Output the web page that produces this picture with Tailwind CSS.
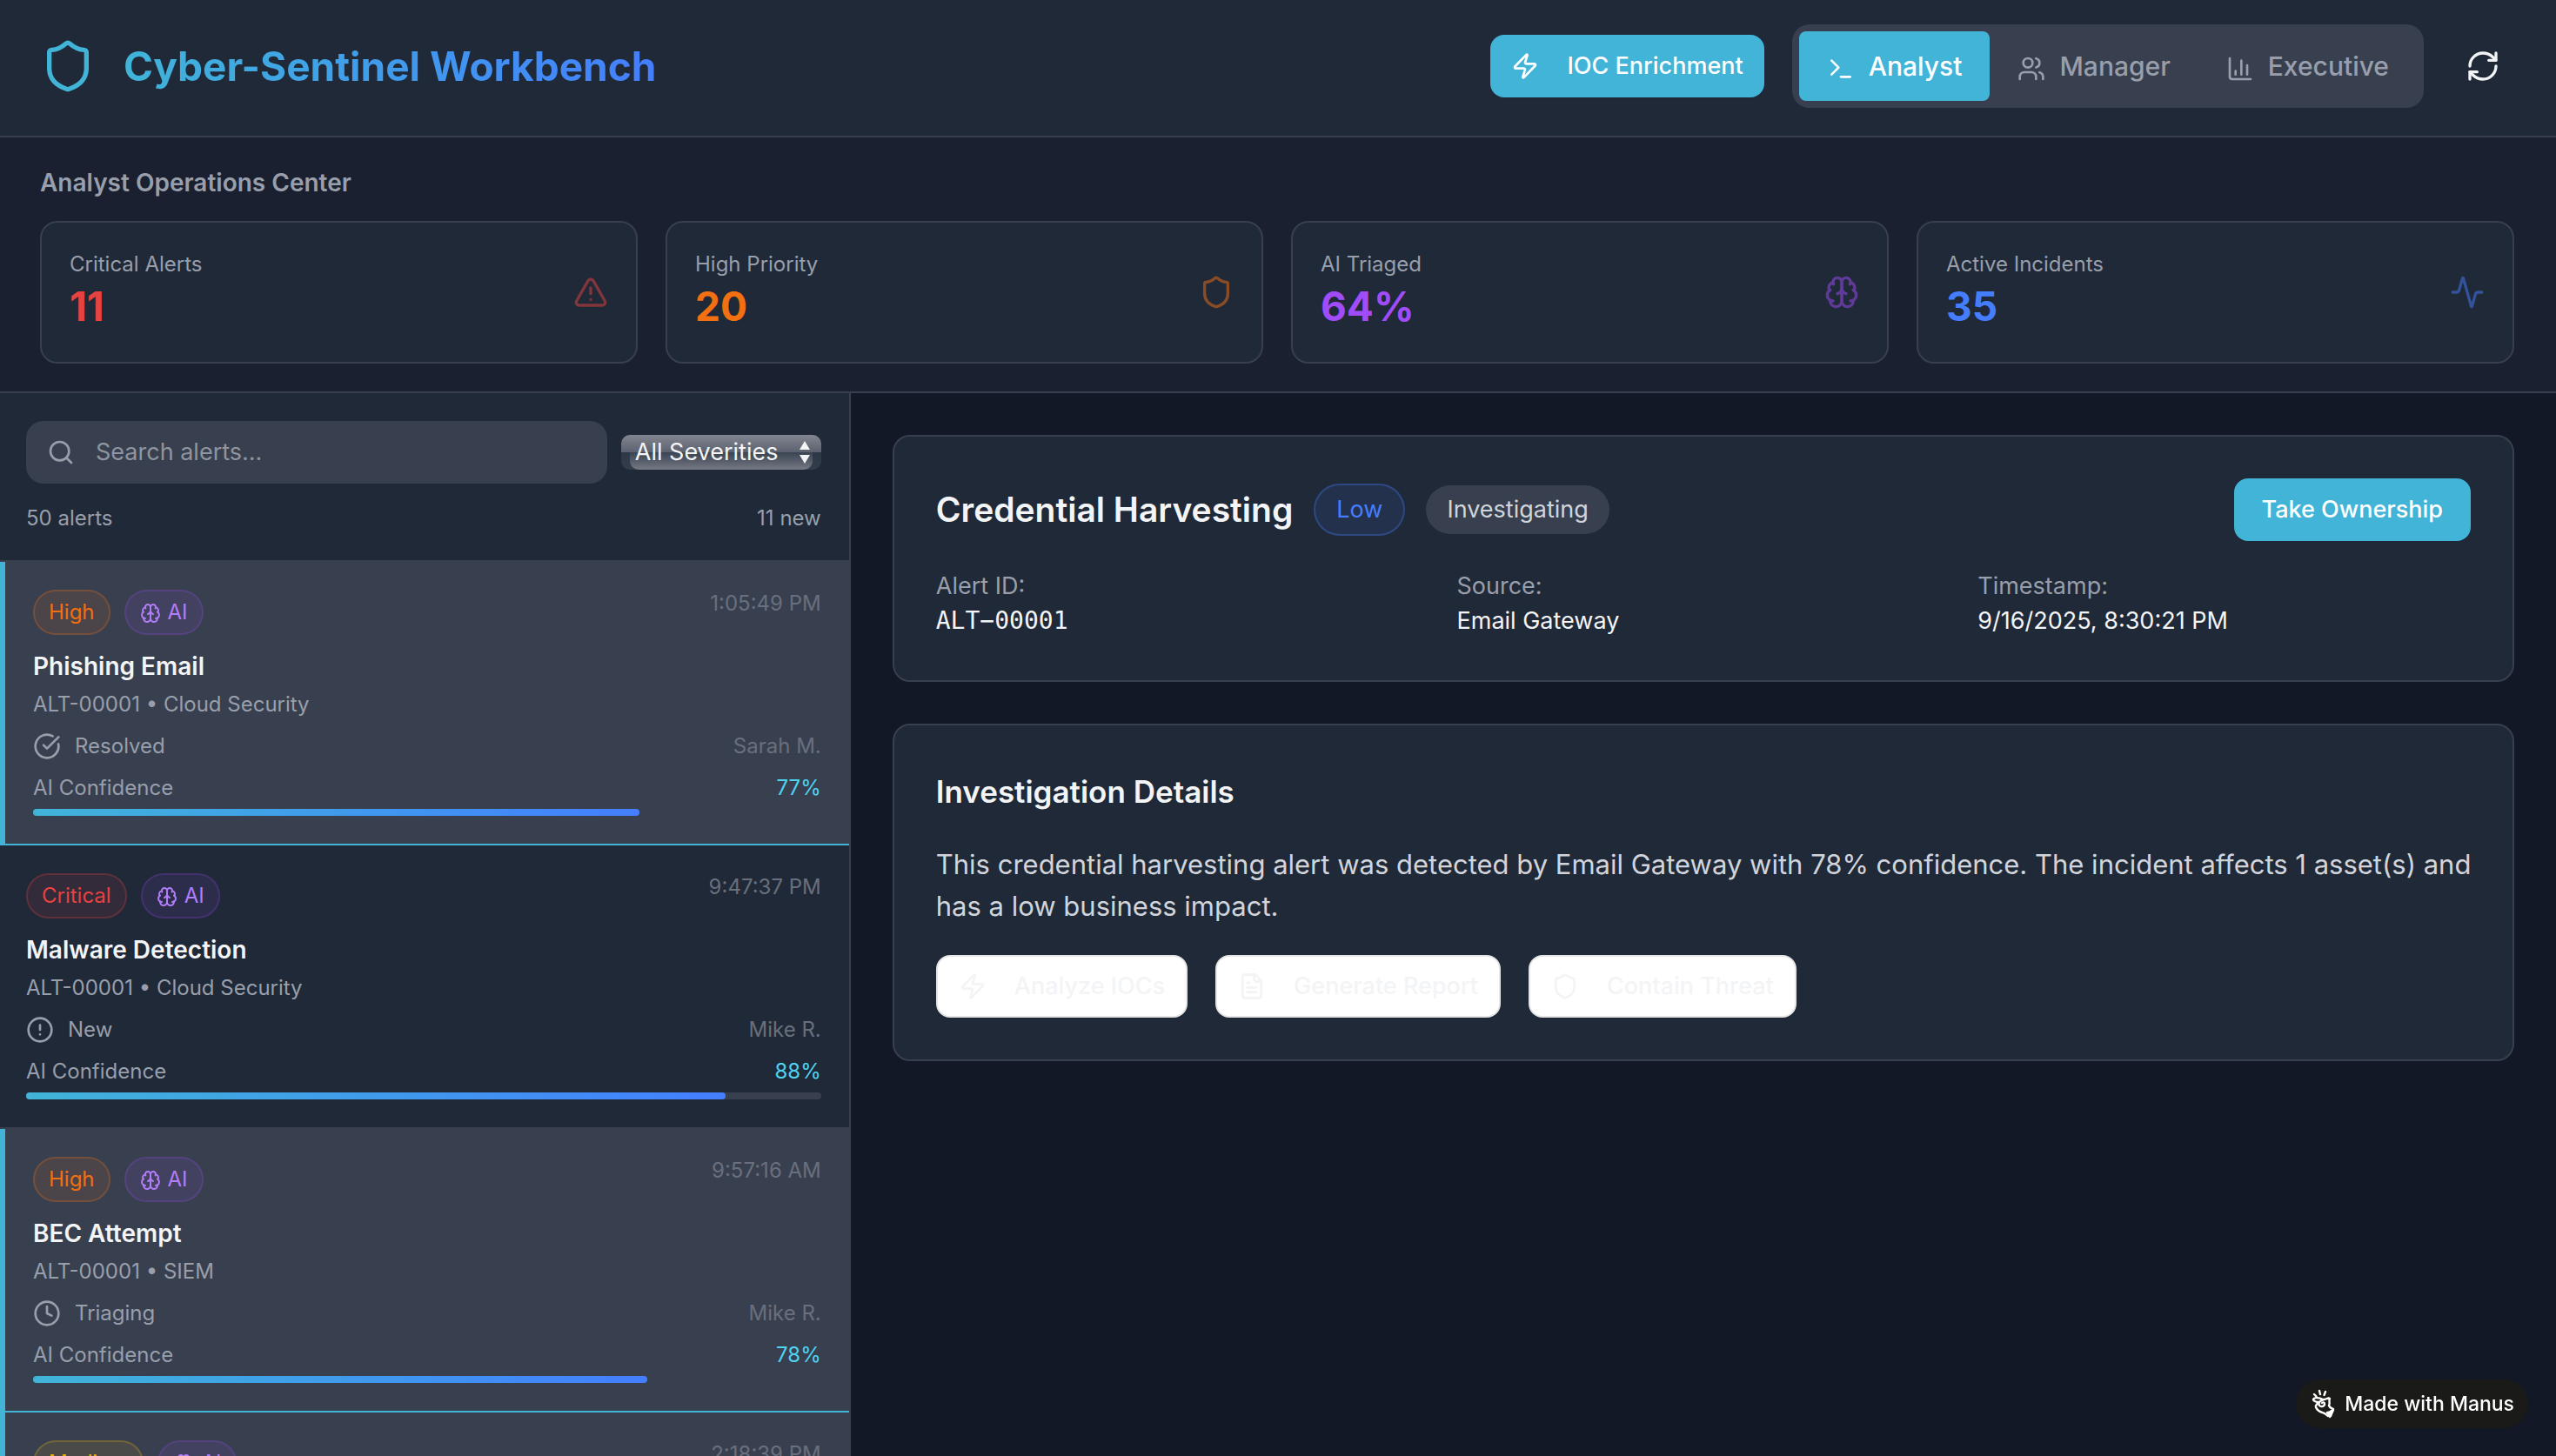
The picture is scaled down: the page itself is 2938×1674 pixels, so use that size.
<!DOCTYPE html>
<html lang="en">
<head>
<meta charset="utf-8">
<meta name="viewport" content="width=device-width, initial-scale=1">
<title>Cyber-Sentinel Workbench</title>
<script src="https://cdn.jsdelivr.net/npm/@tailwindcss/browser@4"></script>
</head>
<body class="flex h-screen flex-col overflow-hidden bg-[#121826] font-['Inter',sans-serif] text-[28px] leading-10 text-[#f3f4f6]">

<!-- Icon set -->
<svg class="hidden" aria-hidden="true">
  <symbol id="shield" viewBox="0 0 24 24"><path d="M20 13c0 5-3.5 7.5-7.66 8.95a1 1 0 0 1-.67-.01C7.5 20.5 4 18 4 13V6a1 1 0 0 1 1-1c2 0 4.5-1.2 6.24-2.72a1.17 1.17 0 0 1 1.52 0C14.51 3.81 17 5 19 5a1 1 0 0 1 1 1z"/></symbol>
  <symbol id="zap" viewBox="0 0 24 24"><path d="M4 14a1 1 0 0 1-.78-1.63l9.9-10.2a.5.5 0 0 1 .86.46l-1.92 6.02A1 1 0 0 0 13 10h7a1 1 0 0 1 .78 1.63l-9.9 10.2a.5.5 0 0 1-.86-.46l1.92-6.02A1 1 0 0 0 11 14z"/></symbol>
  <symbol id="terminal" viewBox="0 0 24 24"><path d="m4 17 6-6-6-6M12 19h8"/></symbol>
  <symbol id="users" viewBox="0 0 24 24"><path d="M16 21v-2a4 4 0 0 0-4-4H6a4 4 0 0 0-4 4v2"/><circle cx="9" cy="7" r="4"/><path d="M22 21v-2a4 4 0 0 0-3-3.87M16 3.13a4 4 0 0 1 0 7.75"/></symbol>
  <symbol id="chart" viewBox="0 0 24 24"><path d="M3 3v16a2 2 0 0 0 2 2h16M18 17V9M13 17V5M8 17v-3"/></symbol>
  <symbol id="refresh" viewBox="0 0 24 24"><path d="M3 12a9 9 0 0 1 9-9 9.75 9.75 0 0 1 6.74 2.74L21 8"/><path d="M21 3v5h-5M21 12a9 9 0 0 1-9 9 9.75 9.75 0 0 1-6.74-2.74L3 16"/><path d="M8 16H3v5"/></symbol>
  <symbol id="triangle" viewBox="0 0 24 24"><path d="m21.73 18-8-14a2 2 0 0 0-3.48 0l-8 14A2 2 0 0 0 4 21h16a2 2 0 0 0 1.73-3M12 9v4M12 17h.01"/></symbol>
  <symbol id="brain" viewBox="0 0 24 24"><path d="M12 5a3 3 0 1 0-5.997.125 4 4 0 0 0-2.526 5.77 4 4 0 0 0 .556 6.588A4 4 0 1 0 12 18Z"/><path d="M12 5a3 3 0 1 1 5.997.125 4 4 0 0 1 2.526 5.77 4 4 0 0 1-.556 6.588A4 4 0 1 1 12 18Z"/><path d="M15 13a4.5 4.5 0 0 1-3-4 4.5 4.5 0 0 1-3 4M17.599 6.5a3 3 0 0 0 .399-1.375M6.003 5.125A3 3 0 0 0 6.401 6.5M3.477 10.896a4 4 0 0 1 .585-.396M19.938 10.5a4 4 0 0 1 .585.396M6 18a4 4 0 0 1-1.967-.516M19.967 17.484A4 4 0 0 1 18 18"/></symbol>
  <symbol id="activity" viewBox="0 0 24 24"><path d="M22 12h-2.48a2 2 0 0 0-1.93 1.46l-2.35 8.36a.25.25 0 0 1-.48 0L9.24 2.18a.25.25 0 0 0-.48 0l-2.35 8.36A2 2 0 0 1 4.49 12H2"/></symbol>
  <symbol id="search" viewBox="0 0 24 24"><circle cx="11" cy="11" r="8"/><path d="m21 21-4.34-4.34"/></symbol>
  <symbol id="resolved" viewBox="0 0 24 24"><path d="M21.801 10A10 10 0 1 1 17 3.335"/><path d="m9 11 3 3L22 4"/></symbol>
  <symbol id="new" viewBox="0 0 24 24"><circle cx="12" cy="12" r="10"/><path d="M12 8v4M12 16h.01"/></symbol>
  <symbol id="clock" viewBox="0 0 24 24"><circle cx="12" cy="12" r="10"/><path d="M12 6v6l4 2"/></symbol>
  <symbol id="file" viewBox="0 0 24 24"><path d="M15 2H6a2 2 0 0 0-2 2v16a2 2 0 0 0 2 2h12a2 2 0 0 0 2-2V7Z"/><path d="M14 2v4a2 2 0 0 0 2 2h4M10 9H8M16 13H8M16 17H8"/></symbol>
</svg>

<header class="flex shrink-0 items-center justify-between border-b-2 border-[#384050] bg-[#202938] pt-7 pr-12 pb-8 pl-[46px]">
  <div class="flex items-center gap-8">
    <svg class="size-16 fill-none stroke-[#41b4d8] stroke-2 [stroke-linecap:round] [stroke-linejoin:round]"><use href="#shield"/></svg>
    <h1 class="bg-linear-to-r from-[#41b4d8] to-[#447efe] bg-clip-text text-[46px] leading-16 font-bold text-transparent">Cyber-Sentinel Workbench</h1>
  </div>
  <div class="flex items-center gap-8">
    <button type="button" class="flex h-18 items-center gap-8 rounded-2xl bg-[#41b4d8] px-6 text-[27px] font-medium text-white shadow-xs">
      <svg class="size-8 fill-none stroke-current stroke-2 [stroke-linecap:round] [stroke-linejoin:round]"><use href="#zap"/></svg>IOC Enrichment
    </button>
    <nav class="flex rounded-[20px] bg-[#384050] p-2 text-[30px] leading-12 font-medium text-[#989fab]">
      <button type="button" class="rounded-lg bg-[#41b4d8] px-8 py-4 text-white"><svg class="mr-4 inline size-8 fill-none stroke-current stroke-2 [stroke-linecap:round] [stroke-linejoin:round]"><use href="#terminal"/></svg>Analyst</button>
      <button type="button" class="rounded-lg px-8 py-4"><svg class="mr-4 inline size-8 fill-none stroke-current stroke-2 [stroke-linecap:round] [stroke-linejoin:round]"><use href="#users"/></svg>Manager</button>
      <button type="button" class="rounded-lg px-8 py-4"><svg class="mr-4 inline size-8 fill-none stroke-current stroke-2 [stroke-linecap:round] [stroke-linejoin:round]"><use href="#chart"/></svg>Executive</button>
    </nav>
    <button type="button" aria-label="Refresh" class="p-4"><svg class="size-10 fill-none stroke-current stroke-2 [stroke-linecap:round] [stroke-linejoin:round]"><use href="#refresh"/></svg></button>
  </div>
</header>

<section class="shrink-0 border-b-2 border-[#384050] bg-[#1a202f] pt-8 pr-12 pb-8 pl-[46px]">
  <h2 class="mb-6 font-semibold text-[#989fab]">Analyst Operations Center</h2>
  <div class="grid grid-cols-4 gap-8">
    <div class="flex items-center justify-between rounded-[20px] border-2 border-[#384050] bg-[#202938] p-8">
      <div><p class="text-2xl text-[#989fab]">Critical Alerts</p><p class="text-[46px] leading-16 font-bold text-[#e64240]">11</p></div>
      <svg class="size-10 fill-none stroke-[#e64240] stroke-2 opacity-50 [stroke-linecap:round] [stroke-linejoin:round]"><use href="#triangle"/></svg>
    </div>
    <div class="flex items-center justify-between rounded-[20px] border-2 border-[#384050] bg-[#202938] p-8">
      <div><p class="text-2xl text-[#989fab]">High Priority</p><p class="text-[46px] leading-16 font-bold text-[#f27011]">20</p></div>
      <svg class="size-10 fill-none stroke-[#f27011] stroke-2 opacity-50 [stroke-linecap:round] [stroke-linejoin:round]"><use href="#shield"/></svg>
    </div>
    <div class="flex items-center justify-between rounded-[20px] border-2 border-[#384050] bg-[#202938] p-8">
      <div><p class="text-2xl text-[#989fab]">AI Triaged</p><p class="text-[46px] leading-16 font-bold text-[#a04cf8]">64%</p></div>
      <svg class="size-10 fill-none stroke-[#a04cf8] stroke-2 opacity-50 [stroke-linecap:round] [stroke-linejoin:round]"><use href="#brain"/></svg>
    </div>
    <div class="flex items-center justify-between rounded-[20px] border-2 border-[#384050] bg-[#202938] p-8">
      <div><p class="text-2xl text-[#989fab]">Active Incidents</p><p class="text-[46px] leading-16 font-bold text-[#447efe]">35</p></div>
      <svg class="size-10 fill-none stroke-[#447efe] stroke-2 opacity-50 [stroke-linecap:round] [stroke-linejoin:round]"><use href="#activity"/></svg>
    </div>
  </div>
</section>

<div class="flex min-h-0 flex-1">
  <aside class="flex w-[33.28%] shrink-0 flex-col overflow-hidden border-r-2 border-[#384050] bg-[#202938] text-2xl text-[#989fab]">
    <div class="shrink-0 border-b-2 border-[#384050] py-8 pr-8 pl-[30px]">
      <div class="flex items-center gap-4">
        <label class="flex h-18 min-w-0 flex-1 items-center gap-6 rounded-[20px] bg-[#384050] px-6">
          <svg class="size-8 shrink-0 fill-none stroke-current stroke-2 [stroke-linecap:round] [stroke-linejoin:round]"><use href="#search"/></svg>
          <input type="text" aria-label="Search alerts" placeholder="Search alerts..." class="min-w-0 flex-1 bg-transparent text-[27px] outline-none placeholder:text-[#8f949e]">
        </label>
        <div class="relative h-10 w-[230px] overflow-hidden rounded-[10px] bg-[linear-gradient(to_bottom,#83868f,#5b6170_50%,#2e3746_50%,#343d4c)]">
          <div class="absolute inset-x-[10px] top-1/2 bottom-0 rounded-b-[10px] bg-linear-to-b from-[#3a4351] to-[#767a84]"></div>
          <select aria-label="Severity" class="relative h-10 w-full appearance-none bg-transparent pl-4 text-[27px] text-[#f3f4f6] outline-none">
            <option>All Severities</option><option>Critical</option><option>High</option><option>Medium</option><option>Low</option>
          </select>
          <svg viewBox="0 0 14 28" class="pointer-events-none absolute top-1.5 right-3 h-7 w-3.5 fill-[#f3f4f6]"><path d="M7 1l6 10H1zM7 27l6-10H1z"/></svg>
        </div>
      </div>
      <div class="mt-6 flex justify-between leading-8"><span>50 alerts</span><span>11 new</span></div>
    </div>

    <ul class="min-h-0 flex-1 overflow-hidden leading-8">
      <li class="border-b-2 border-l-6 border-[#41b4d8] bg-[#384050] p-8">
        <div class="flex items-start justify-between">
          <div class="flex gap-4">
            <span class="rounded-full border-2 border-[#f27011]/25 bg-[#f27011]/10 px-4 py-2 text-[#f27011]">High</span>
            <span class="rounded-full border-2 border-[#a04cf8]/20 bg-[#a04cf8]/10 px-4 py-2 text-[#b27df8]"><svg class="mr-2 inline size-6 fill-none stroke-current stroke-2 [stroke-linecap:round] [stroke-linejoin:round]"><use href="#brain"/></svg>AI</span>
          </div>
          <time class="text-[#696f7c]">1:05:49 PM</time>
        </div>
        <h3 class="mt-4 text-[28px] leading-10 font-semibold text-[#f3f4f6]">Phishing Email</h3>
        <p class="mt-2">ALT-00001 • Cloud Security</p>
        <div class="mt-4 flex items-center gap-4"><svg class="size-8 fill-none stroke-current stroke-2 [stroke-linecap:round] [stroke-linejoin:round]"><use href="#resolved"/></svg><span>Resolved</span><span class="ml-auto text-[#696f7c]">Sarah M.</span></div>
        <div class="mt-4 flex justify-between"><span>AI Confidence</span><span class="text-[#4fd3f0]">77%</span></div>
        <div class="mt-2 h-2 rounded-full bg-[#384050]"><div class="h-2 rounded-full bg-linear-to-r from-[#41b4d8] to-[#447efe]" style="width:77%"></div></div>
      </li>
      <li class="border-b-2 border-[#384050] py-8 pr-8 pl-[30px]">
        <div class="flex items-start justify-between">
          <div class="flex gap-4">
            <span class="rounded-full border-2 border-[#e64240]/25 bg-[#e64240]/10 px-4 py-2 text-[#e64240]">Critical</span>
            <span class="rounded-full border-2 border-[#a04cf8]/20 bg-[#a04cf8]/10 px-4 py-2 text-[#b27df8]"><svg class="mr-2 inline size-6 fill-none stroke-current stroke-2 [stroke-linecap:round] [stroke-linejoin:round]"><use href="#brain"/></svg>AI</span>
          </div>
          <time class="text-[#696f7c]">9:47:37 PM</time>
        </div>
        <h3 class="mt-4 text-[28px] leading-10 font-semibold text-[#f3f4f6]">Malware Detection</h3>
        <p class="mt-2">ALT-00001 • Cloud Security</p>
        <div class="mt-4 flex items-center gap-4"><svg class="size-8 fill-none stroke-current stroke-2 [stroke-linecap:round] [stroke-linejoin:round]"><use href="#new"/></svg><span>New</span><span class="ml-auto text-[#696f7c]">Mike R.</span></div>
        <div class="mt-4 flex justify-between"><span>AI Confidence</span><span class="text-[#4fd3f0]">88%</span></div>
        <div class="mt-2 h-2 rounded-full bg-[#384050]"><div class="h-2 rounded-full bg-linear-to-r from-[#41b4d8] to-[#447efe]" style="width:88%"></div></div>
      </li>
      <li class="border-b-2 border-l-6 border-[#41b4d8] bg-[#384050] p-8">
        <div class="flex items-start justify-between">
          <div class="flex gap-4">
            <span class="rounded-full border-2 border-[#f27011]/25 bg-[#f27011]/10 px-4 py-2 text-[#f27011]">High</span>
            <span class="rounded-full border-2 border-[#a04cf8]/20 bg-[#a04cf8]/10 px-4 py-2 text-[#b27df8]"><svg class="mr-2 inline size-6 fill-none stroke-current stroke-2 [stroke-linecap:round] [stroke-linejoin:round]"><use href="#brain"/></svg>AI</span>
          </div>
          <time class="text-[#696f7c]">9:57:16 AM</time>
        </div>
        <h3 class="mt-4 text-[28px] leading-10 font-semibold text-[#f3f4f6]">BEC Attempt</h3>
        <p class="mt-2">ALT-00001 • SIEM</p>
        <div class="mt-4 flex items-center gap-4"><svg class="size-8 fill-none stroke-current stroke-2 [stroke-linecap:round] [stroke-linejoin:round]"><use href="#clock"/></svg><span>Triaging</span><span class="ml-auto text-[#696f7c]">Mike R.</span></div>
        <div class="mt-4 flex justify-between"><span>AI Confidence</span><span class="text-[#4fd3f0]">78%</span></div>
        <div class="mt-2 h-2 rounded-full bg-[#384050]"><div class="h-2 rounded-full bg-linear-to-r from-[#41b4d8] to-[#447efe]" style="width:78%"></div></div>
      </li>
      <li class="border-b-2 border-l-6 border-[#41b4d8] bg-[#384050] p-8">
        <div class="flex items-start justify-between">
          <div class="flex gap-4">
            <span class="rounded-full border-2 border-[#eab308]/25 bg-[#eab308]/10 px-4 py-2 text-[#eab308]">Medium</span>
            <span class="rounded-full border-2 border-[#a04cf8]/20 bg-[#a04cf8]/10 px-4 py-2 text-[#b27df8]"><svg class="mr-2 inline size-6 fill-none stroke-current stroke-2 [stroke-linecap:round] [stroke-linejoin:round]"><use href="#brain"/></svg>AI</span>
          </div>
          <time class="text-[#696f7c]">2:18:39 PM</time>
        </div>
      </li>
    </ul>
  </aside>

  <main class="flex min-w-0 flex-1 flex-col gap-12 p-12">
    <section class="rounded-[20px] border-2 border-[#384050] bg-[#202938] p-12">
      <div class="flex items-center justify-between">
        <div class="flex items-center gap-6">
          <h2 class="text-[39px] leading-16 font-semibold">Credential Harvesting</h2>
          <span class="rounded-full border-2 border-[#447efe]/30 bg-[#447efe]/10 px-6 py-2 text-[27px] text-[#447efe]">Low</span>
          <span class="rounded-full bg-[#384050] px-6 py-2 text-[27px] text-[#d1d5db]">Investigating</span>
        </div>
        <button type="button" class="h-18 rounded-2xl bg-[#41b4d8] px-8 text-[27px] font-medium text-white shadow-xs">Take Ownership</button>
      </div>
      <dl class="mt-8 grid grid-cols-3 gap-8 text-[27px]">
        <div><dt class="text-[#989fab]">Alert ID:</dt><dd class="font-['DejaVu_Sans_Mono',monospace] text-[28px]">ALT−00001</dd></div>
        <div><dt class="text-[#989fab]">Source:</dt><dd>Email Gateway</dd></div>
        <div><dt class="text-[#989fab]">Timestamp:</dt><dd>9/16/2025, 8:30:21 PM</dd></div>
      </dl>
    </section>
    <section class="rounded-[20px] border-2 border-[#384050] bg-[#202938] p-12">
      <h3 class="text-[35px] leading-14 font-semibold">Investigation Details</h3>
      <p class="mt-8 -mr-6 text-[31px] leading-12 text-[#d1d5db]">This credential harvesting alert was detected by Email Gateway with 78% confidence. The incident affects 1 asset(s) and has a low business impact.</p>
      <div class="mt-8 flex gap-8 text-[27px]">
        <button type="button" class="flex h-18 items-center gap-8 rounded-2xl border-2 border-[#e5e5e5] bg-white px-6 font-medium text-[#f3f4f6] shadow-xs"><svg class="size-8 fill-none stroke-current stroke-2 [stroke-linecap:round] [stroke-linejoin:round]"><use href="#zap"/></svg>Analyze IOCs</button>
        <button type="button" class="flex h-18 items-center gap-8 rounded-2xl border-2 border-[#e5e5e5] bg-white px-6 font-medium text-[#f3f4f6] shadow-xs"><svg class="size-8 fill-none stroke-current stroke-2 [stroke-linecap:round] [stroke-linejoin:round]"><use href="#file"/></svg>Generate Report</button>
        <button type="button" class="flex h-18 items-center gap-8 rounded-2xl border-2 border-[#e5e5e5] bg-white px-6 font-medium text-[#f3f4f6] shadow-xs"><svg class="size-8 fill-none stroke-current stroke-2 [stroke-linecap:round] [stroke-linejoin:round]"><use href="#shield"/></svg>Contain Threat</button>
      </div>
    </section>
  </main>
</div>

<a href="#" class="fixed right-8 bottom-8 flex h-14 items-center gap-2 rounded-full bg-[#1a1a19] px-4 text-[23px] font-medium text-white">
  <svg viewBox="0 0 32 36" class="h-9 w-8 fill-none stroke-white stroke-[2.4] [stroke-linecap:round] [stroke-linejoin:round]">
    <path d="M5 7l2.500 2.500M11 3l1 4M18 4l-1.500 4"/>
    <path d="M22 20c2-3-1-5 1-8-2-2-5 2-8 1-4-2-10-3-11 0 0 2 4 3 6 3-1 2-4 3-3 6 2 5 7 6 10 7l4 3M22 20c1 3 3 3 5 4l-3 8"/>
    <path d="M16 13c-4 1-7 4-5 7 2 2 6 1 6-2 0-2-2-2-3-1"/>
    <path d="M20 28l3 5 4-8c-2 0-3 3-7 3z" class="fill-white"/>
  </svg>
  Made with Manus
</a>
</body>
</html>
